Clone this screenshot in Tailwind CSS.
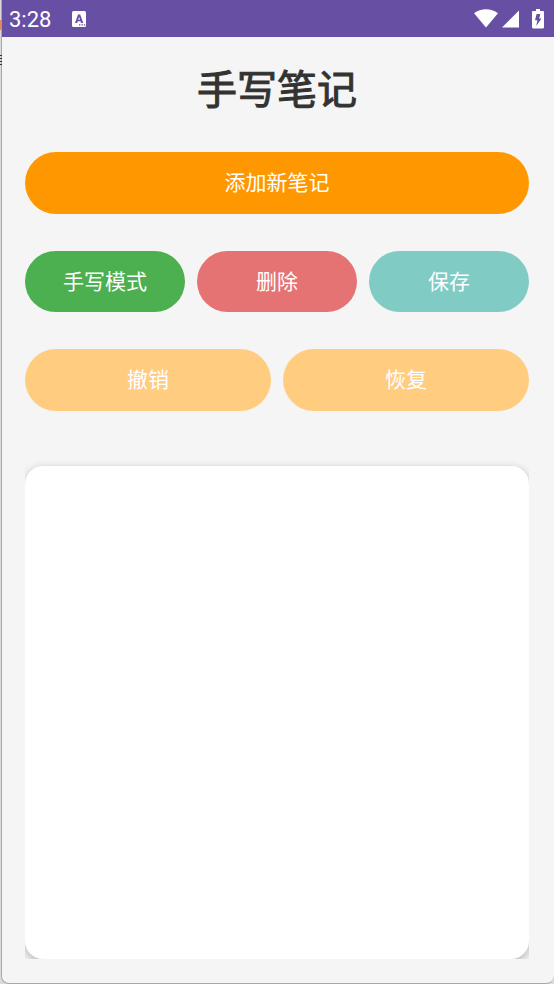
<!DOCTYPE html>
<html lang="zh-CN">
<head>
<meta charset="utf-8">
<meta name="viewport" content="width=device-width, initial-scale=1">
<title>手写笔记</title>
<script src="https://cdn.jsdelivr.net/npm/@tailwindcss/browser@4"></script>
</head>
<body class="relative flex min-h-screen flex-col bg-[#dadada] pl-px font-['Noto_Sans_CJK_SC',sans-serif]">
<div class="absolute top-5 left-0 h-2.5 w-0.5 bg-[#e08a5c]" aria-hidden="true"></div>
<div class="absolute top-[55px] left-0 flex flex-col gap-0.5" aria-hidden="true">
  <i class="h-px w-0.5 bg-[#333]"></i><i class="h-px w-0.5 bg-[#333]"></i><i class="h-px w-0.5 bg-[#333]"></i><i class="h-px w-0.5 bg-[#333]"></i>
</div>
<div class="flex flex-1 flex-col overflow-hidden rounded-b-lg border-b border-l border-[#a8a8a8] bg-[#f5f5f5]">
  <header class="flex h-[37px] items-center justify-between bg-[#6750a4] pr-2.5 pl-[7px] text-white">
    <div class="flex items-center gap-5">
      <time class="pt-0.5 font-['Roboto',sans-serif] text-[22px] leading-6 font-normal">3:28</time>
      <svg class="h-4 w-4" viewBox="0 0 16 16" aria-hidden="true">
        <rect x="1" width="14" height="16" rx="1.5" fill="#fff"/>
        <path d="M4 12 7 3.500h2.200L12.200 12H10l-.5-1.700H6.700L6.200 12zM7.200 8.700H9L8.100 5.800z" fill="#6750a4"/>
        <path d="M8 13.200h1.400v1.200H8zM10.400 13.200h1.400v1.200h-1.400zM12.800 13.200h1.400v1.200h-1.400z" fill="#6750a4"/>
      </svg>
    </div>
    <div class="flex items-center gap-1">
      <svg class="h-5 w-6" viewBox="0 0 24 20" fill="#fff" aria-hidden="true"><path d="M0 4.300C7-1 17-1 24 4.300L12 18.500z"/></svg>
      <svg class="h-5 w-[18px]" viewBox="0 0 18 20" fill="#fff" aria-hidden="true"><path d="M0 18.500 17 1.500V18.500z"/></svg>
      <svg class="ml-2 h-5 w-3" viewBox="0 0 12 20" aria-hidden="true">
        <path d="M4 0h4v2h2.800c.7 0 1.200.5 1.200 1.200v15c0 .7-.5 1.200-1.200 1.200H1.200C.5 19.400 0 18.900 0 18.200V3.200C0 2.500.5 2 1.200 2H4z" fill="#fff"/>
        <path d="M8.300 5H4.600L3 11.300h2.400L4.200 17l5.300-7.500H7.200z" fill="#6750a4"/>
      </svg>
    </div>
  </header>
  <main class="flex flex-1 flex-col pr-[25px] pb-6 pl-[23px]">
    <h1 class="pt-5 pb-[35px] text-center text-[40px] leading-[60px] font-normal text-[#333] [-webkit-text-stroke:1px_#333]">手写笔记</h1>
    <div class="flex flex-col gap-[37px] text-[21px] leading-8 text-white">
      <button type="button" class="h-[62px] w-full rounded-full bg-[#ff9800] pb-1">添加新笔记</button>
      <div class="grid grid-cols-3 gap-3">
        <button type="button" class="h-[61px] rounded-full bg-[#4caf50] pb-1">手写模式</button>
        <button type="button" class="h-[61px] rounded-full bg-[#e57373] pb-1">删除</button>
        <button type="button" class="h-[61px] rounded-full bg-[#80cbc4] pb-1">保存</button>
      </div>
      <div class="grid grid-cols-2 gap-3">
        <button type="button" class="h-[62px] rounded-full bg-[#ffcc80] pb-1">撤销</button>
        <button type="button" class="h-[62px] rounded-full bg-[#ffcc80] pb-1">恢复</button>
      </div>
    </div>
    <div class="mt-9 flex flex-1 flex-col overflow-hidden pt-[19px]">
      <canvas class="w-full flex-1 rounded-[18px] bg-white shadow-[0_3px_10px_rgba(0,0,0,0.28)]" aria-label="手写区域"></canvas>
    </div>
  </main>
</div>
</body>
</html>
